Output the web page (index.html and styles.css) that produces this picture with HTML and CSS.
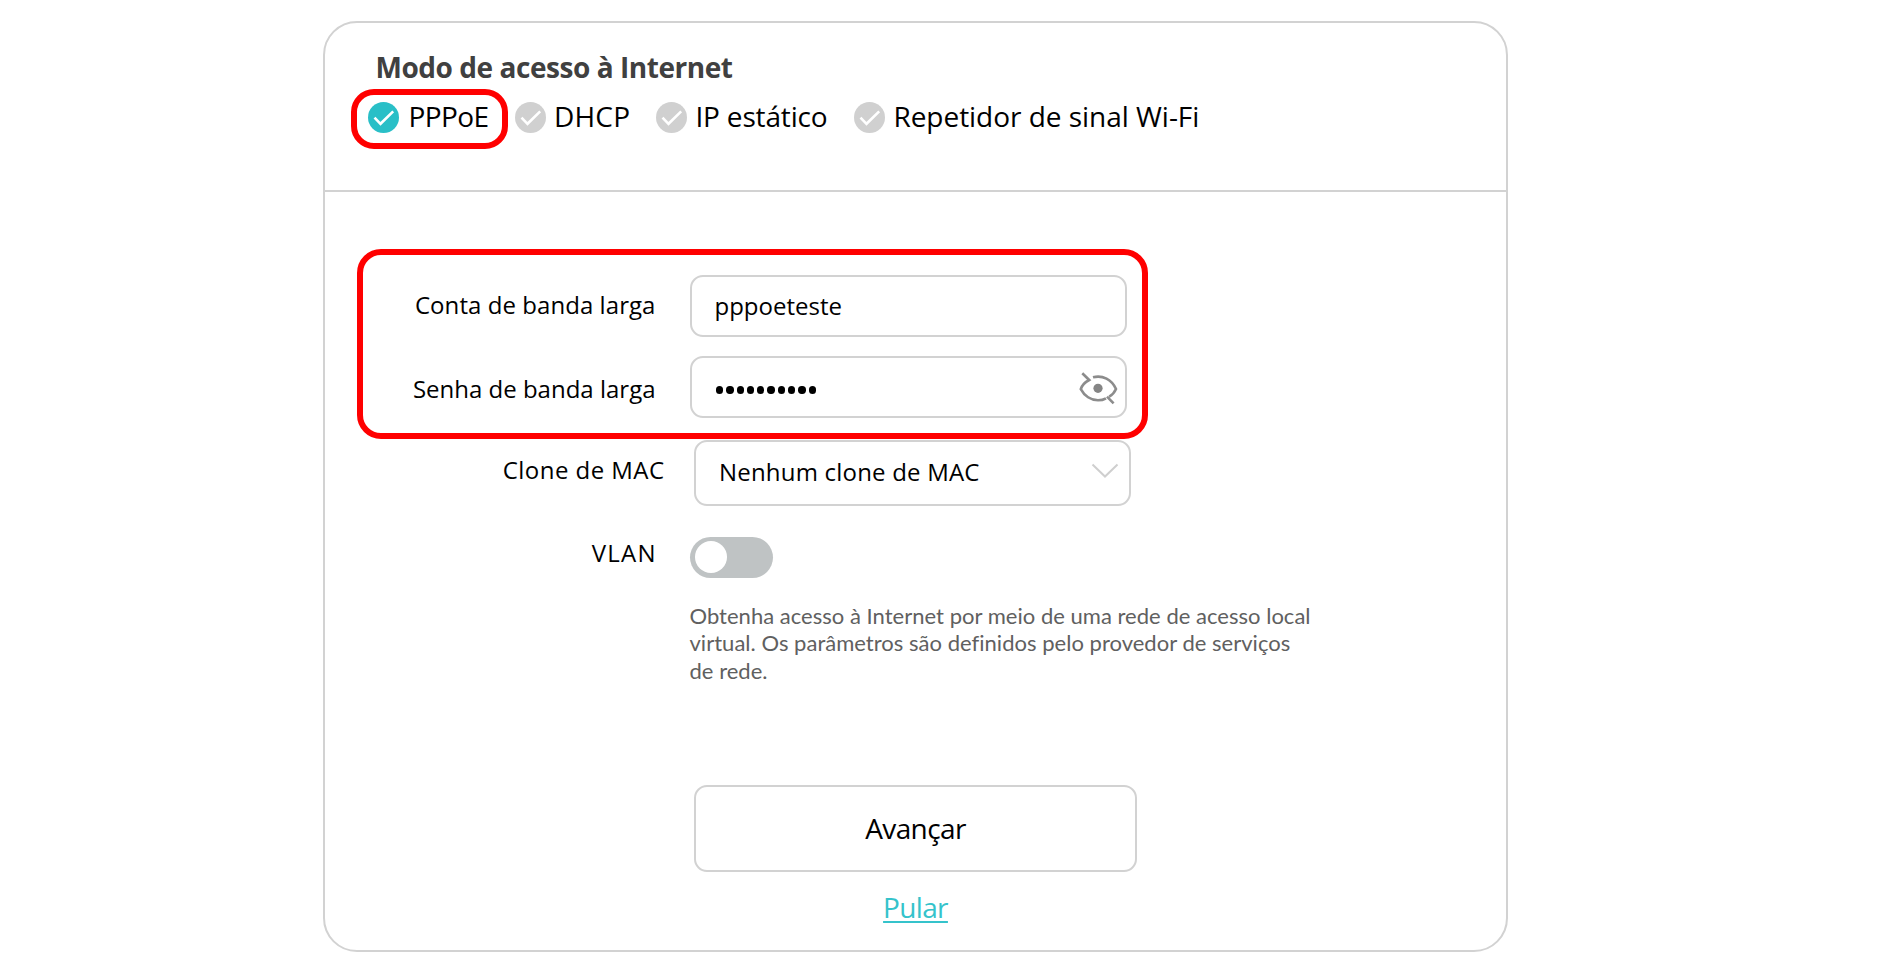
FILE: index.html
```html
<!DOCTYPE html>
<html lang="pt">
<head>
<meta charset="utf-8">
<title>Modo de acesso à Internet</title>
<link rel="stylesheet" href="styles.css">
</head>
<body>
<main class="card">
  <header class="head">
    <h1 class="title">Modo de acesso à Internet</h1>
    <div class="modes">
      <div class="mode active"><svg class="check" viewBox="0 0 31 31"><circle cx="15.5" cy="15.5" r="15.5"/><path d="M6.500 15.600l6 6.200L25.200 9.400"/></svg><span class="t-pppoe">PPPoE</span><i class="mark mark-mode"></i></div>
      <div class="mode"><svg class="check" viewBox="0 0 31 31"><circle cx="15.5" cy="15.5" r="15.5"/><path d="M6.500 15.600l6 6.200L25.200 9.400"/></svg><span class="t-dhcp">DHCP</span></div>
      <div class="mode"><svg class="check" viewBox="0 0 31 31"><circle cx="15.5" cy="15.5" r="15.5"/><path d="M6.500 15.600l6 6.200L25.200 9.400"/></svg><span class="t-ip">IP estático</span></div>
      <div class="mode"><svg class="check" viewBox="0 0 31 31"><circle cx="15.5" cy="15.5" r="15.5"/><path d="M6.500 15.600l6 6.200L25.200 9.400"/></svg><span class="t-rep">Repetidor de sinal Wi-Fi</span></div>
    </div>
  </header>
  <section class="form">
    <div class="credentials">
      <div class="row">
        <label class="label t-conta">Conta de banda larga</label>
        <div class="field"><span>pppoeteste</span></div>
      </div>
      <div class="row row-pass">
        <label class="label">Senha de banda larga</label>
        <div class="field">
          <span class="dots"><b></b><b></b><b></b><b></b><b></b><b></b><b></b><b></b><b></b><b></b></span>
          <svg class="eye" viewBox="0 0 44 40"><path d="M6.300 5.300l6.900 6.700C8.800 14.300 5.700 18 4.800 21.200 8.200 27.800 15 32.300 22 32.300c3.300 0 5.700-.6 8-2M17 9.300c9.500-2.600 18.800 2.200 23 11.700-1.400 3.200-3.800 6-6.800 7.600M31 28.600l6.600 6.800"/><circle cx="22" cy="20.300" r="4.600"/></svg>
        </div>
      </div>
      <i class="mark mark-form"></i>
    </div>
    <div class="row row-mac">
      <label class="label t-mac">Clone de MAC</label>
      <div class="field select"><span>Nenhum clone de MAC</span><svg class="chev" viewBox="0 0 28 16"><path d="M1.500 1.500L14 13.500 26.500 1.500"/></svg></div>
    </div>
    <div class="row row-vlan">
      <label class="label t-vlan">VLAN</label>
      <div class="toggle"><span class="knob"></span></div>
    </div>
    <p class="hint">Obtenha acesso à Internet por meio de uma rede de acesso local<br>virtual. Os parâmetros são definidos pelo provedor de serviços<br>de rede.</p>
  </section>
  <footer class="actions">
    <button class="next">Avançar</button>
    <a class="skip">Pular</a>
  </footer>
</main>
</body>
</html>
```

FILE: styles.css
```css
* { box-sizing: border-box; }

body {
  margin: 0;
  padding: 21px 0 0 323px;
  background: #fff;
  color: #000;
  font: 24px/33px "Open Sans", "Noto Sans", sans-serif;
}

.card {
  width: 1185px;
  height: 931px;
  border: 2px solid #d2d2d2;
  border-radius: 34px;
}

/* access mode */
.head {
  height: 169px;
  padding: 25px 0 0 43px;
  border-bottom: 2px solid #d2d2d2;
}

.title {
  margin: 0 0 11px 7.500px;
  color: #404040;
  font-size: 28px;
  font-weight: 700;
  line-height: 38px;
  letter-spacing: -0.450px;
}

.modes {
  display: grid;
  grid-template-columns: 147px 141.400px 198px 345px;
  font-size: 28px;
  line-height: 38px;
}

.mode {
  position: relative;
  display: flex;
  gap: 8px;
  white-space: nowrap;
}

.active { gap: 9.500px; }

.check {
  flex: none;
  width: 31px;
  height: 31px;
  margin-top: 5px;
}

.check circle { fill: #d0d0d0; }
.active .check circle { fill: #29bfc7; }
.check path { fill: none; stroke: #fff; stroke-width: 2.600; }

.t-pppoe { letter-spacing: -0.600px; }
.t-dhcp { letter-spacing: 0.200px; }
.t-ip { letter-spacing: -0.160px; }
.t-rep { letter-spacing: -0.030px; }

/* red highlight frames */
.mark {
  position: absolute;
  border: 6px solid #f00;
}

.mark-mode {
  left: -17px;
  top: -8px;
  width: 157px;
  height: 60px;
  border-radius: 23px;
}

.mark-form {
  left: 32px;
  top: -26px;
  width: 791px;
  height: 190px;
  border-radius: 24px;
}

/* form */
.form { padding-top: 83px; }

.credentials { position: relative; }

.row {
  display: grid;
  grid-template-columns: 330.500px 437px;
  column-gap: 34.500px;
  height: 62px;
}

.row-pass { margin-top: 19px; }

.row-mac {
  grid-template-columns: 338.500px 437px;
  column-gap: 30.500px;
  margin-top: 22px;
  height: 66px;
}

.row-vlan {
  margin-top: 31px;
  height: 41px;
}

.label {
  text-align: right;
  padding-top: 13px;
  white-space: nowrap;
}

.row-pass .label { padding-top: 16px; }
.row-mac .label { padding-top: 13px; }
.row-vlan .label { padding-top: 0; margin-top: -1px; }

.t-conta { letter-spacing: 0.060px; }
.t-mac { margin-right: -1px; letter-spacing: 0.450px; }
.t-vlan { margin-right: -1.200px; letter-spacing: 1.200px; }

.field {
  display: flex;
  align-items: center;
  justify-content: space-between;
  padding: 0 5px 2px 22.500px;
  border: 2px solid #d2d2d2;
  border-radius: 13px;
  white-space: nowrap;
}

.select {
  padding: 0 10px 3px 23px;
  letter-spacing: 0.200px;
}

.dots {
  display: flex;
  gap: 3px;
  padding: 8px 0 0 1.500px;
}

.dots b {
  width: 7.300px;
  height: 7.300px;
  border-radius: 50%;
  background: #000;
}

.eye {
  width: 44px;
  height: 40px;
  margin-top: 4px;
}

.eye path { fill: none; stroke: #8c8c8c; stroke-width: 2.600; }
.eye circle { fill: #858585; }

.chev {
  width: 28px;
  height: 16px;
  margin-top: -1px;
}

.chev path { fill: none; stroke: #cfcfcf; stroke-width: 2; }

.toggle {
  width: 83px;
  height: 41px;
  padding: 4px 5px;
  border-radius: 21px;
  background: #bfc3c4;
}

.knob {
  display: block;
  width: 32px;
  height: 32px;
  border-radius: 50%;
  background: #fff;
}

.hint {
  margin: 24px 0 0 364.500px;
  color: #606060;
  font: 22px/27.300px Lato, "Open Sans", sans-serif;
  letter-spacing: 0.020px;
}

/* actions */
.actions {
  display: flex;
  flex-direction: column;
  align-items: center;
  margin-top: 101px;
}

.next {
  width: 443px;
  height: 87px;
  padding: 0;
  border: 2px solid #d2d2d2;
  border-radius: 13px;
  background: #fff;
  color: #000;
  font: 28px/38px "Open Sans", "Noto Sans", sans-serif;
  letter-spacing: -0.600px;
}

.skip {
  margin-top: 16px;
  color: #35c3cb;
  font-size: 28px;
  line-height: 38px;
  letter-spacing: -0.650px;
  text-decoration: underline;
  text-decoration-thickness: 2px;
  text-underline-offset: 3px;
  text-decoration-skip-ink: none;
}
```
